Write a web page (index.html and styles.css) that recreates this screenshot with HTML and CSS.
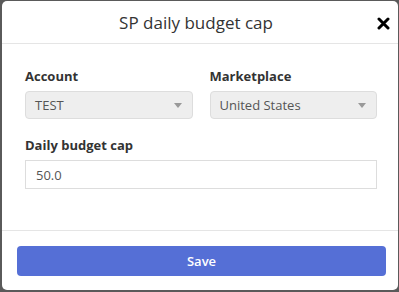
FILE: index.html
```html
<!DOCTYPE html>
<html>
<head>
<meta charset="utf-8">
<link rel="stylesheet" href="styles.css">
</head>
<body>
<div class="modal">
  <div class="modal-header">
    <h4 class="modal-title">SP daily budget cap</h4>
    <svg class="close" width="13" height="13" viewBox="0 0 13 13"><path d="M2 2L11 11M11 2L2 11" stroke="#000" stroke-width="3" stroke-linecap="round"/></svg>
  </div>
  <div class="modal-body">
    <div class="row">
      <div class="field">
        <label class="label">Account</label>
        <div class="select"><span>TEST</span><span class="caret"></span></div>
      </div>
      <div class="field">
        <label class="label">Marketplace</label>
        <div class="select"><span>United States</span><span class="caret"></span></div>
      </div>
    </div>
    <div class="field">
      <label class="label">Daily budget cap</label>
      <div class="input">50.0</div>
    </div>
  </div>
  <div class="modal-footer">
    <button class="btn">Save</button>
  </div>
</div>
</body>
</html>
```

FILE: styles.css
```css
html, body { margin: 0; height: 100%; }
body {
  background: #5a5a5a;
  padding: 1px 1px 2px 2px;
  box-sizing: border-box;
  font-family: "Open Sans", "Noto Sans", sans-serif;
  color: #333;
}
.modal {
  background: #fff;
  border-radius: 5px;
  height: 289px;
  display: flex;
  flex-direction: column;
}
.modal-header {
  height: 42px;
  border-bottom: 1px solid #e5e5e5;
  display: flex;
  align-items: center;
  justify-content: center;
  position: relative;
}
.modal-title {
  margin: 0 0 0 -8px;
  font-weight: 400;
  font-size: 17px;
  color: #333;
}
.close {
  position: absolute;
  right: 8px;
  top: 16px;
}
.modal-body {
  flex: 1;
  padding: 23px 21px 0 23px;
  display: flex;
  flex-direction: column;
  gap: 17px;
}
.row {
  display: flex;
  gap: 17px;
}
.row .field { flex: 1; }
.label {
  display: block;
  font-size: 13px;
  font-weight: 700;
  color: #333;
  margin-bottom: 6px;
  line-height: 18px;
}
.select {
  height: 28px;
  box-sizing: border-box;
  background: #eee;
  border: 1px solid #ddd;
  border-radius: 4px;
  display: flex;
  align-items: center;
  justify-content: space-between;
  padding: 0 10px 0 9px;
  font-size: 13px;
  color: #555;
}
.caret {
  width: 0; height: 0;
  border-left: 4px solid transparent;
  border-right: 4px solid transparent;
  border-top: 5px solid #999;
}
.input {
  height: 29px;
  box-sizing: border-box;
  border: 1px solid #ddd;
  display: flex;
  align-items: center;
  padding: 0 10px;
  font-size: 13px;
  color: #555;
}
.modal-footer {
  border-top: 1px solid #e5e5e5;
  padding: 15px 12px 14px 15px;
}
.btn {
  display: block;
  width: 100%;
  height: 30px;
  border: 0;
  border-radius: 4px;
  background: #556fd6;
  color: #fff;
  font-family: "Open Sans", "Noto Sans", sans-serif;
  font-size: 13px;
  font-weight: 600;
}
```
